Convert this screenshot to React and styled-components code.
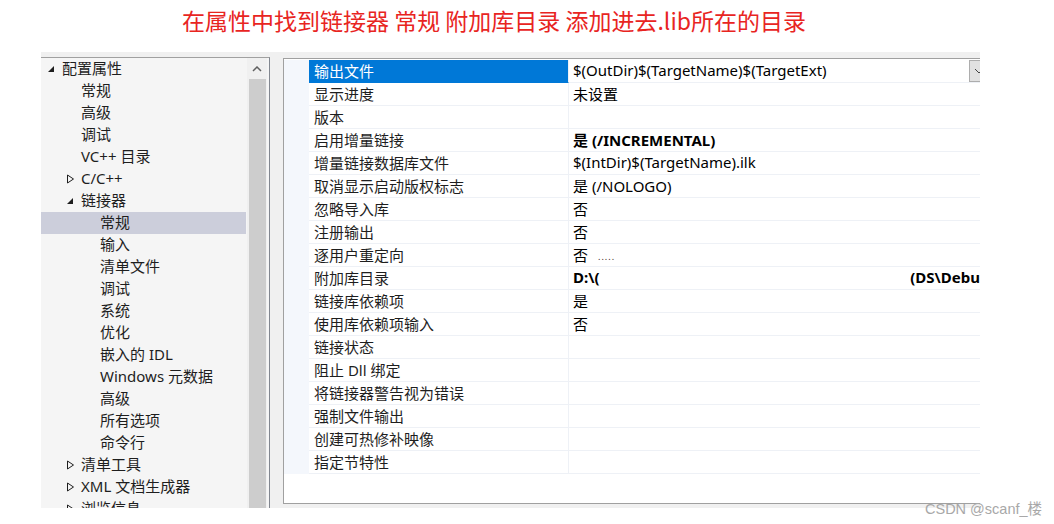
import React from 'react'
import styled, { createGlobalStyle } from 'styled-components'

const Global = createGlobalStyle`
  html, body {
    margin: 0;
    padding: 0;
    background: #fff;
  }
  body {
    font-family: "Noto Sans", "Noto Sans CJK SC", sans-serif;
    width: 1054px;
    height: 524px;
    overflow: hidden;
    position: relative;
  }
`

const Title = styled.div`
  height: 52px;
  padding-left: 182px;
  box-sizing: border-box;
  padding-top: 5px;
  font-family: "Noto Sans CJK SC", sans-serif;
  font-size: 23px;
  line-height: 30px;
  color: #e8251f;
  white-space: nowrap;
`

const Frame = styled.div`
  margin-left: 41px;
  width: 939px;
  height: 456px;
  background: #f0f0f0;
  overflow: hidden;
  display: flex;
  align-items: flex-start;
  gap: 13px;
  padding-top: 5px;
  box-sizing: border-box;
`

const TreePanel = styled.div`
  width: 228px;
  height: 460px;
  flex: none;
  display: flex;
  border-top: 1px solid #a0a0a0;
  border-right: 1px solid #828790;
  background: #f5f5f5;
`

const TreeList = styled.div`
  width: 205px;
  flex: none;
`

const TreeRow = styled.div`
  height: 22px;
  box-sizing: border-box;
  padding-bottom: 3px;
  display: flex;
  align-items: center;
  padding-left: ${p => 6 + p.$level * 19}px;
  background: ${p => (p.$selected ? '#cccedb' : 'transparent')};
  font-size: 15px;
  color: #1e1e1e;
  white-space: nowrap;
`

const Arrow = styled.span`
  width: 15px;
  flex: none;
  display: flex;
  align-items: center;
  padding-top: 2px;
`

const Spacer = styled.span`
  width: 15px;
  flex: none;
`

const Scrollbar = styled.div`
  width: 20px;
  margin-left: 1px;
  background: #f0f0f0;
  display: flex;
  flex-direction: column;
  align-items: center;
`

const ScrollArrow = styled.div`
  height: 21px;
  width: 100%;
  display: flex;
  align-items: center;
  justify-content: center;
`

const Thumb = styled.div`
  flex: 1;
  width: 17px;
  background: #cdcdcd;
`

const GridPanel = styled.div`
  flex: 1;
  height: 446px;
  margin-top: 1px;
  border: 1px solid #a0a0a0;
  border-right: none;
  background: #fff;
  padding-top: 1px;
  box-sizing: border-box;
`

const GridRow = styled.div`
  display: flex;
  height: 23px;
`

const Gutter = styled.div`
  width: 25px;
  flex: none;
  background: #f4f7fc;
`

const NameCell = styled.div`
  width: 254px;
  flex: none;
  padding-left: 5px;
  padding-bottom: 2px;
  display: flex;
  align-items: center;
  font-size: 15px;
  color: ${p => (p.$selected ? '#fff' : '#1e1e1e')};
  background: ${p => (p.$selected ? '#0078d7' : '#fff')};
  border-right: 1px solid #eef1f6;
  border-bottom: 1px solid ${p => (p.$selected ? '#0078d7' : '#eef1f6')};
  white-space: nowrap;
`

const ValueCell = styled.div`
  flex: 1;
  padding-left: 4px;
  padding-bottom: 2px;
  display: flex;
  align-items: center;
  position: relative;
  font-size: 15px;
  font-weight: ${p => (p.$bold ? 700 : 400)};
  color: #000;
  border-bottom: 1px solid #eef1f6;
  white-space: nowrap;
  overflow: hidden;
`

const DropButton = styled.div`
  position: absolute;
  left: 400px;
  top: 0;
  width: 18px;
  height: 20px;
  background: #e1e1e1;
  border: 1px solid #adadad;
  display: flex;
  align-items: center;
  justify-content: center;
`

const Dots = styled.span`
  margin-left: 10px;
  font-size: 9px;
  letter-spacing: 1px;
  color: #422;
  transform: translateY(2px);
`

const Redacted = styled.span`
  display: flex;
  width: 100%;
  align-items: center;
`

const RedactGap = styled.span`
  flex: 1;
  align-self: stretch;
  margin-bottom: -3px;
  background: #fff;
`

const Watermark = styled.div`
  position: absolute;
  left: 925px;
  top: 497px;
  font-family: "Liberation Sans", "Noto Sans CJK SC", sans-serif;
  font-size: 14.5px;
  color: #a8a8a8;
  white-space: nowrap;
`

const Expanded = () => (
  <svg width="8" height="8" viewBox="0 0 8 8">
    <path d="M7 1 L7 7 L1 7 Z" fill="#1e1e1e" />
  </svg>
)

const Collapsed = () => (
  <svg width="9" height="10" viewBox="0 0 9 10">
    <path d="M1.5 1 L7.5 5 L1.5 9 Z" fill="none" stroke="#1e1e1e" strokeWidth="1" />
  </svg>
)

const tree = [
  { label: '配置属性', level: 0, open: true },
  { label: '常规', level: 1 },
  { label: '高级', level: 1 },
  { label: '调试', level: 1 },
  { label: 'VC++ 目录', level: 1 },
  { label: 'C/C++', level: 1, open: false },
  { label: '链接器', level: 1, open: true },
  { label: '常规', level: 2, selected: true },
  { label: '输入', level: 2 },
  { label: '清单文件', level: 2 },
  { label: '调试', level: 2 },
  { label: '系统', level: 2 },
  { label: '优化', level: 2 },
  { label: '嵌入的 IDL', level: 2 },
  { label: 'Windows 元数据', level: 2 },
  { label: '高级', level: 2 },
  { label: '所有选项', level: 2 },
  { label: '命令行', level: 2 },
  { label: '清单工具', level: 1, open: false },
  { label: 'XML 文档生成器', level: 1, open: false },
  { label: '浏览信息', level: 1, open: false },
]

const props = [
  { name: '输出文件', value: '$(OutDir)$(TargetName)$(TargetExt)', selected: true },
  { name: '显示进度', value: '未设置' },
  { name: '版本', value: '' },
  { name: '启用增量链接', value: '是 (/INCREMENTAL)', bold: true },
  { name: '增量链接数据库文件', value: '$(IntDir)$(TargetName).ilk' },
  { name: '取消显示启动版权标志', value: '是 (/NOLOGO)' },
  { name: '忽略导入库', value: '否' },
  { name: '注册输出', value: '否' },
  { name: '逐用户重定向', value: '否', dots: true },
  { name: '附加库目录', value: 'redacted', bold: true },
  { name: '链接库依赖项', value: '是' },
  { name: '使用库依赖项输入', value: '否' },
  { name: '链接状态', value: '' },
  { name: '阻止 Dll 绑定', value: '' },
  { name: '将链接器警告视为错误', value: '' },
  { name: '强制文件输出', value: '' },
  { name: '创建可热修补映像', value: '' },
  { name: '指定节特性', value: '' },
]

const renderValue = p => {
  if (p.value === 'redacted') {
    return (
      <Redacted>
        <span>D:\(</span>
        <RedactGap />
        <span>(DS\Debu</span>
      </Redacted>
    )
  }
  return (
    <>
      {p.value}
      {p.dots && <Dots>.....</Dots>}
      {p.selected && (
        <DropButton>
          <svg width="10" height="6" viewBox="0 0 10 6">
            <path d="M1 1 L5 5 L9 1" fill="none" stroke="#444" strokeWidth="1" />
          </svg>
        </DropButton>
      )}
    </>
  )
}

export default function App() {
  return (
    <>
      <Global />
      <Title>在属性中找到链接器 常规 附加库目录 添加进去.lib所在的目录</Title>
      <Frame>
        <TreePanel>
          <TreeList>
            {tree.map((t, i) => (
              <TreeRow key={i} $level={t.level} $selected={t.selected}>
                {t.open === true && <Arrow><Expanded /></Arrow>}
                {t.open === false && <Arrow><Collapsed /></Arrow>}
                {t.open === undefined && <Spacer />}
                {t.label}
              </TreeRow>
            ))}
          </TreeList>
          <Scrollbar>
            <ScrollArrow>
              <svg width="10" height="6" viewBox="0 0 10 6">
                <path d="M1 5 L5 1 L9 5" fill="none" stroke="#606060" strokeWidth="1.5" />
              </svg>
            </ScrollArrow>
            <Thumb />
          </Scrollbar>
        </TreePanel>
        <GridPanel>
          {props.map((p, i) => (
            <GridRow key={i}>
              <Gutter />
              <NameCell $selected={p.selected}>{p.name}</NameCell>
              <ValueCell $bold={p.bold}>{renderValue(p)}</ValueCell>
            </GridRow>
          ))}
        </GridPanel>
      </Frame>
      <Watermark>CSDN @scanf_楼</Watermark>
    </>
  )
}
